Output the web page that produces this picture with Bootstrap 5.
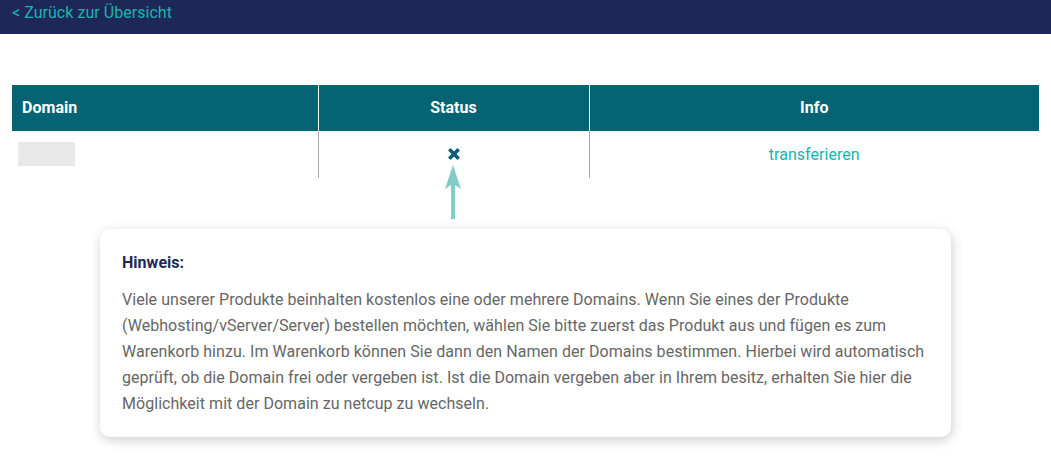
<!DOCTYPE html>
<html lang="de">
<head>
  <meta charset="UTF-8">
  <title>Domain Status</title>
  <link href="https://cdn.jsdelivr.net/npm/bootstrap@5.3.0/dist/css/bootstrap.min.css" rel="stylesheet">
  <style>
    body {
      font-family: Roboto, "Liberation Sans", sans-serif;
      font-size: 16px;
      letter-spacing: 0.04px;
      color: #666;
      background: #fff;
      padding-bottom: 33px;
    }
    .top-bar {
      height: 34px;
      background: #1e2858;
      padding: 0 12px;
      line-height: 25px;
    }
    .top-bar a, .transfer-link {
      color: #17b5ae;
      text-decoration: none;
    }
    .domain-table {
      margin: 51px 12px 0;
      width: 1027px;
      table-layout: fixed;
      border-collapse: collapse;
    }
    .domain-table th {
      height: 46px;
      padding: 0 10px;
      background: #046473;
      color: #fff;
      font-weight: 700;
      text-align: center;
      border-left: 1px solid #fff;
    }
    .domain-table th:first-child { text-align: left; border-left: 0; }
    .domain-table td {
      height: 47px;
      padding: 0;
      text-align: center;
      vertical-align: middle;
      border-left: 1px solid #aaa;
    }
    .domain-table td:first-child { border-left: 0; }
    .domain-table td.cell-raised { padding-bottom: 2px; }
    .domain-mask {
      width: 57px;
      height: 24px;
      margin-left: 6px;
      background: #e8e8e8;
    }
    .arrow-wrap {
      display: flow-root;
      height: 51px;
      padding-left: 444px;
    }
    .arrow-icon {
      margin-top: -13px;
      position: relative;
    }
    .hint-box {
      width: 851px;
      height: 208px;
      margin-left: 100px;
      padding: 22px;
      background: #fff;
      border-radius: 10px;
      box-shadow: 1px 3px 12px rgba(0, 0, 0, 0.2);
    }
    .hint-title {
      color: #1e2858;
      font-weight: 700;
      line-height: 24px;
      margin-bottom: 12px;
    }
    .hint-text {
      line-height: 26px;
      margin: 0;
    }
  </style>
</head>
<body>
  <div class="top-bar"><a href="#">&lt; Zurück zur Übersicht</a></div>

  <table class="domain-table">
    <colgroup>
      <col style="width: 306px">
      <col style="width: 271px">
      <col>
    </colgroup>
    <thead>
      <tr><th>Domain</th><th>Status</th><th>Info</th></tr>
    </thead>
    <tbody>
      <tr>
        <td class="cell-raised"><div class="domain-mask"></div></td>
        <td class="cell-raised">
          <svg class="d-block mx-auto" width="14" height="14" viewBox="0 0 14 14">
            <path d="M2.300 2.300 L11.700 11.700 M11.700 2.300 L2.300 11.700" stroke="#0a5f74" stroke-width="3.600" fill="none"/>
          </svg>
        </td>
        <td><a class="transfer-link" href="#">transferieren</a></td>
      </tr>
    </tbody>
  </table>

  <div class="arrow-wrap">
    <svg class="arrow-icon d-block" width="18" height="54" viewBox="0 0 18 54">
      <path d="M9 0 L17 24 L11 20 V54 H7 V20 L1 24 Z" fill="#84ccc6"/>
    </svg>
  </div>

  <div class="hint-box">
    <div class="hint-title">Hinweis:</div>
    <p class="hint-text">Viele unserer Produkte beinhalten kostenlos eine oder mehrere Domains. Wenn Sie eines der Produkte<br>
    (Webhosting/vServer/Server) bestellen möchten, wählen Sie bitte zuerst das Produkt aus und fügen es zum<br>
    Warenkorb hinzu. Im Warenkorb können Sie dann den Namen der Domains bestimmen. Hierbei wird automatisch<br>
    geprüft, ob die Domain frei oder vergeben ist. Ist die Domain vergeben aber in Ihrem besitz, erhalten Sie hier die<br>
    Möglichkeit mit der Domain zu netcup zu wechseln.</p>
  </div>

  <script src="https://cdn.jsdelivr.net/npm/bootstrap@5.3.0/dist/js/bootstrap.bundle.min.js"></script>
</body>
</html>
